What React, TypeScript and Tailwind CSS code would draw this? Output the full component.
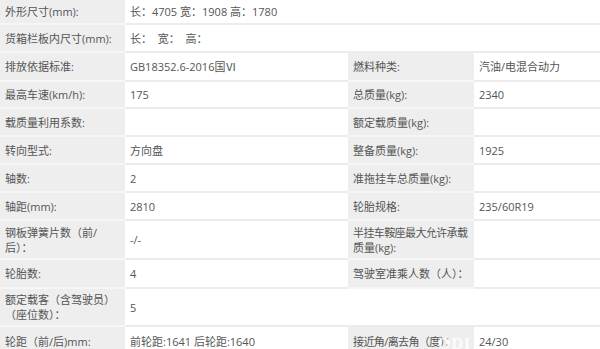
import React from "react";

type Cell = { label: React.ReactNode; value?: React.ReactNode };
type Row = { h: string; cells: Cell[]; full?: boolean };

const rows: Row[] = [
  { h: "h-[25px]", full: true, cells: [{ label: "外形尺寸(mm):", value: "长：4705 宽：1908 高：1780" }] },
  { h: "h-[28px]", full: true, cells: [{ label: "货箱栏板内尺寸(mm):", value: "长：  宽：  高：" }] },
  { h: "h-[29px]", cells: [{ label: "排放依据标准:", value: "GB18352.6-2016国Ⅵ" }, { label: "燃料种类:", value: "汽油/电混合动力" }] },
  { h: "h-[27px]", cells: [{ label: "最高车速(km/h):", value: "175" }, { label: "总质量(kg):", value: "2340" }] },
  { h: "h-[28px]", cells: [{ label: "载质量利用系数:", value: "" }, { label: "额定载质量(kg):", value: "" }] },
  { h: "h-[28px]", cells: [{ label: "转向型式:", value: "方向盘" }, { label: "整备质量(kg):", value: "1925" }] },
  { h: "h-[28px]", cells: [{ label: "轴数:", value: "2" }, { label: "准拖挂车总质量(kg):", value: "" }] },
  { h: "h-[28px]", cells: [{ label: "轴距(mm):", value: "2810" }, { label: "轮胎规格:", value: "235/60R19" }] },
  {
    h: "h-[39px]",
    cells: [
      { label: (<>钢板弹簧片数（前/<br />后）：</>), value: "-/-" },
      { label: (<><span className="tracking-[-0.6px]">半挂车鞍座最大允许承载</span><br />质量(kg):</>), value: "" },
    ],
  },
  { h: "h-[29px]", cells: [{ label: "轮胎数:", value: "4" }, { label: "驾驶室准乘人数（人）：", value: "" }] },
  { h: "h-[38px]", full: true, cells: [{ label: (<>额定载客（含驾驶员）<br />（座位数）：</>), value: "5" }] },
  { h: "h-[30px]", cells: [{ label: "轮距（前/后)mm:", value: "前轮距:1641 后轮距:1640" }, { label: (<span className="tracking-[-0.6px]">接近角/离去角（度）：</span>), value: "24/30" }] },
];

function LabelCell({ children }: { children: React.ReactNode }) {
  return (
    <div className="flex items-center bg-[#eeeeee] pl-[5px] leading-[15px] whitespace-nowrap overflow-hidden border-b-2 border-[#f6f6f6]">
      <div>{children}</div>
    </div>
  );
}

function ValueCell({ children, span }: { children: React.ReactNode; span?: boolean }) {
  return (
    <div className={`flex items-center bg-white pl-[5px] leading-[15px] border-b-2 border-[#ececec] ${span ? "col-span-3" : ""}`}>
      <div className="whitespace-pre">{children}</div>
    </div>
  );
}

export default function App() {
  return (
    <div className="w-[600px] h-[349px] overflow-hidden bg-white text-[11px] text-[#555555] font-['Open_Sans','Noto_Sans_CJK_SC',sans-serif]">
      {rows.map((r, i) => (
        <div key={i} className={`relative grid grid-cols-[125px_223px_126px_126px] ${r.h}`}>
          {r.full ? (
            <>
              <LabelCell>{r.cells[0].label}</LabelCell>
              <ValueCell span>{r.cells[0].value}</ValueCell>
            </>
          ) : (
            <>
              <LabelCell>{r.cells[0].label}</LabelCell>
              <ValueCell>{r.cells[0].value}</ValueCell>
              <LabelCell>{r.cells[1].label}</LabelCell>
              <ValueCell>{r.cells[1].value}</ValueCell>
            </>
          )}
          {i === rows.length - 1 && (
            <div className="absolute left-[438px] top-[5px] text-[16px] font-bold tracking-[1px] text-white/80 font-['Liberation_Serif',serif]">
              ODI
            </div>
          )}
        </div>
      ))}
    </div>
  );
}
